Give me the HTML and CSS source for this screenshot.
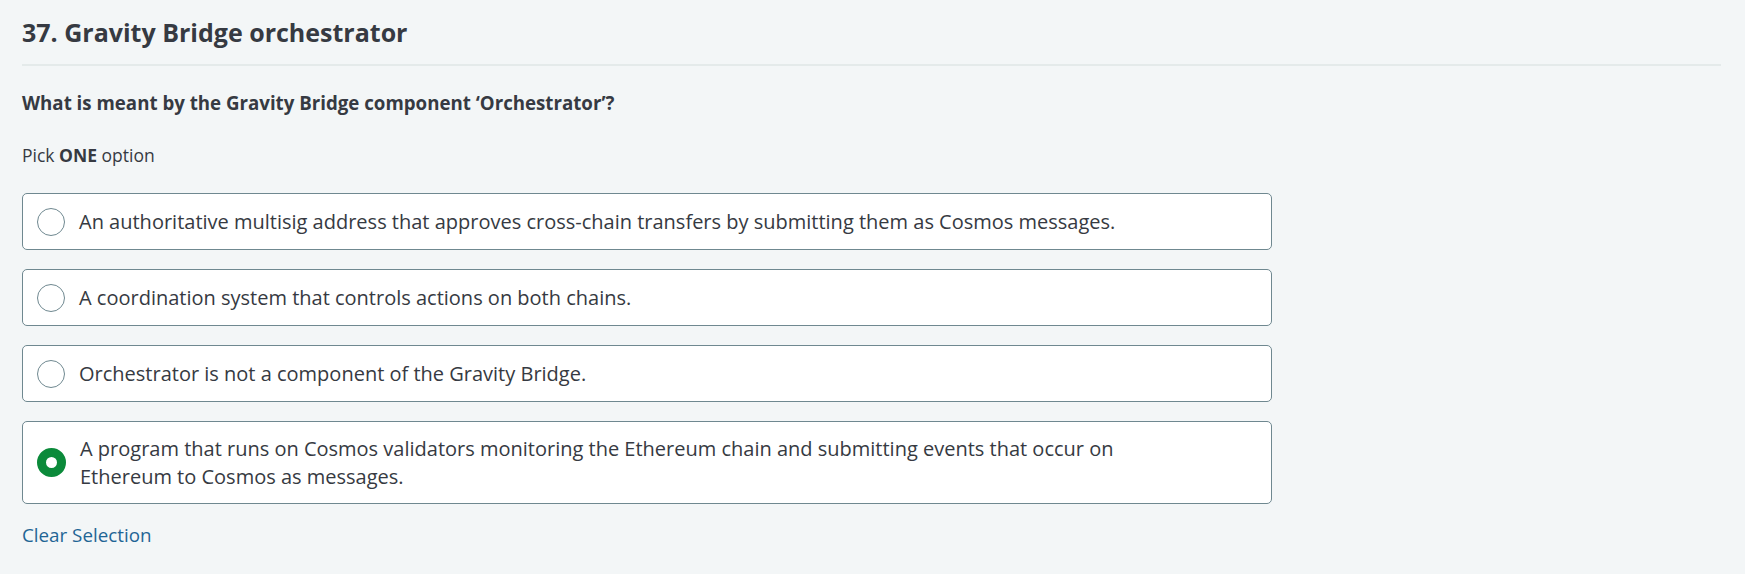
FILE: index.html
```html
<!DOCTYPE html>
<html lang="en">
<head>
<meta charset="utf-8">
<title>Gravity Bridge orchestrator</title>
<link rel="stylesheet" href="styles.css">
</head>
<body>
<main class="page">
  <h1 class="title">37. Gravity Bridge orchestrator</h1>
  <div class="divider"></div>
  <p class="question">What is meant by the Gravity Bridge component ‘Orchestrator’?</p>
  <p class="hint">Pick <strong>ONE</strong> option</p>
  <div class="options">
    <label class="option">
      <span class="radio"></span>
      <span class="text">An authoritative multisig address that approves cross-chain transfers by submitting them as Cosmos messages.</span>
    </label>
    <label class="option">
      <span class="radio"></span>
      <span class="text">A coordination system that controls actions on both chains.</span>
    </label>
    <label class="option">
      <span class="radio"></span>
      <span class="text">Orchestrator is not a component of the Gravity Bridge.</span>
    </label>
    <label class="option">
      <span class="radio selected"></span>
      <span class="text">A program that runs on Cosmos validators monitoring the Ethereum chain and submitting events that occur on Ethereum to Cosmos as messages.</span>
    </label>
  </div>
  <a class="clear" href="#">Clear Selection</a>
</main>
</body>
</html>
```

FILE: styles.css
```css
html, body {
  margin: 0;
  padding: 0;
  background: #f3f6f7;
}
body {
  font-family: "Open Sans", "Noto Sans", sans-serif;
  color: #363a42;
  width: 1745px;
  height: 574px;
  overflow: hidden;
}
.page {
  padding: 12px 24px 0 22px;
}
.title {
  margin: 0;
  font-size: 25px;
  font-weight: 700;
  line-height: 40px;
  color: #363a42;
}
.divider {
  height: 2px;
  background: #e4eaea;
  margin-top: 12px;
}
.question {
  margin: 24px 0 0 0;
  font-size: 18.7px;
  font-weight: 700;
  line-height: 26px;
}
.hint {
  margin: 26px 0 0 0;
  font-size: 17.5px;
  line-height: 26px;
}
.hint strong {
  font-weight: 700;
}
.options {
  display: flex;
  flex-direction: column;
  gap: 19px;
  margin-top: 25px;
  width: 1250px;
}
.option {
  display: flex;
  align-items: center;
  gap: 14px;
  box-sizing: border-box;
  min-height: 57px;
  padding: 12.5px 14px;
  background: #ffffff;
  border: 1px solid #6f8890;
  border-radius: 5px;
}
.radio {
  flex: none;
  box-sizing: border-box;
  width: 28px;
  height: 28px;
  border-radius: 50%;
  border: 1px solid #6f8890;
  background: #fff;
}
.radio.selected {
  width: 29px;
  height: 29px;
  border: 9px solid #0b8a3a;
}
.text {
  font-size: 20px;
  line-height: 28px;
  max-width: 1040px;
  color: #363a42;
}
.clear {
  display: inline-block;
  margin-top: 18px;
  font-size: 18.8px;
  line-height: 26px;
  color: #1f6595;
  text-decoration: none;
}
```
